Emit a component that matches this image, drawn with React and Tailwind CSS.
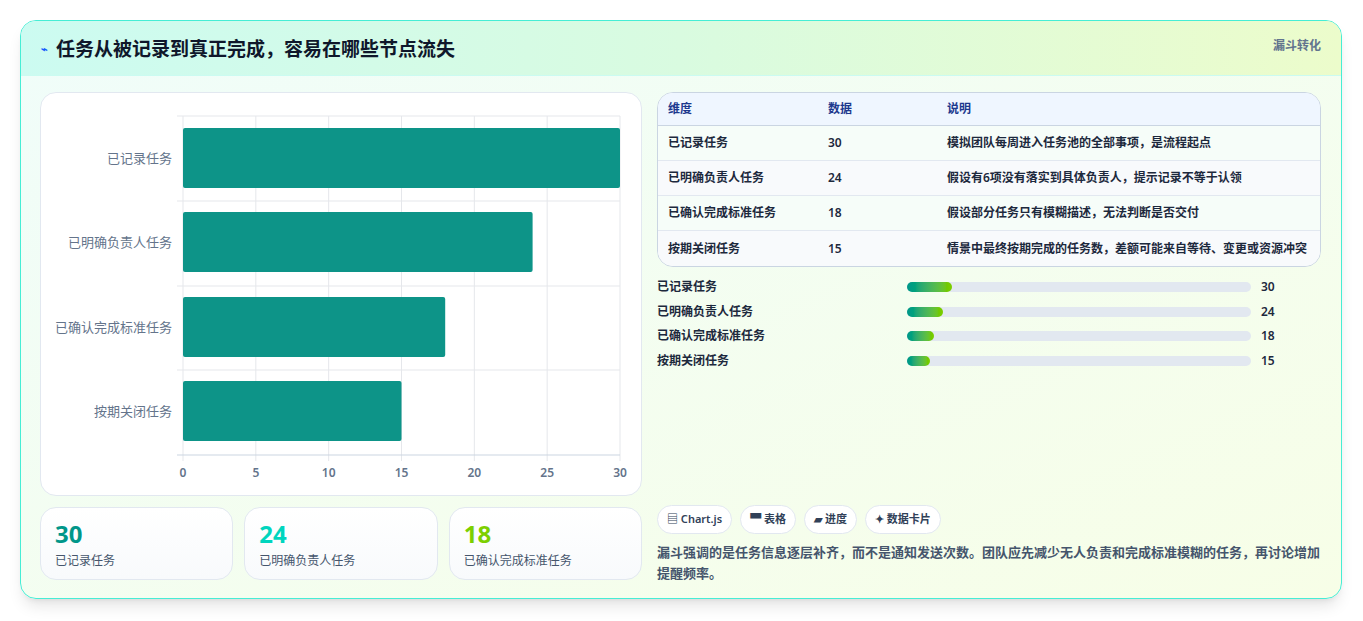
const ROWS = [
  { name: "已记录任务", value: 30, note: "模拟团队每周进入任务池的全部事项，是流程起点" },
  { name: "已明确负责人任务", value: 24, note: "假设有6项没有落实到具体负责人，提示记录不等于认领" },
  { name: "已确认完成标准任务", value: 18, note: "假设部分任务只有模糊描述，无法判断是否交付" },
  { name: "按期关闭任务", value: 15, note: "情景中最终按期完成的任务数，差额可能来自等待、变更或资源冲突" },
];

const font = { fontFamily: '"Noto Sans", "Noto Sans CJK SC", sans-serif' };

function BarChart() {
  const x0 = 142;
  const w = 437;
  const ys = [35, 119, 204, 288];
  return (
    <svg width="602" height="404" className="block">
      {[0, 5, 10, 15, 20, 25, 30].map((t) => (
        <g key={t}>
          <line x1={x0 + (w * t) / 30} x2={x0 + (w * t) / 30} y1="23" y2="368" stroke="#e5e7eb" />
          <text x={x0 + (w * t) / 30} y="384" textAnchor="middle" fontSize="12" fontWeight="600" fill="#64748b">
            {t}
          </text>
        </g>
      ))}
      {[23, 108, 193, 277].map((y) => (
        <line key={y} x1={x0 - 6} x2={x0 + w} y1={y} y2={y} stroke="#e5e7eb" />
      ))}
      <line x1={x0 - 6} x2={x0 + w} y1="362" y2="362" stroke="#cbd5e1" />
      {ROWS.map((r, i) => (
        <g key={r.name}>
          <rect x={x0} y={ys[i]} width={(w * r.value) / 30} height="60" rx="2" fill="#0d9488" />
          <text x={x0 - 11} y={ys[i] + 35} textAnchor="end" fontSize="13" fill="#64748b">
            {r.name}
          </text>
        </g>
      ))}
    </svg>
  );
}

export default function App() {
  return (
    <div className="min-h-screen bg-white px-5 pt-5" style={font}>
      <div className="w-[1322px] overflow-hidden rounded-2xl border border-teal-300 bg-gradient-to-br from-[#f0fdfa] to-[#f7fee7] shadow-lg">
        <div className="flex h-[55px] items-start justify-between border-b border-teal-100 bg-gradient-to-r from-[#ccfbf1] via-[#d9fbe0] to-[#ecfccb] px-5">
          <h1 className="mt-[14px] flex items-center gap-2 text-[19px] font-bold text-slate-900">
            <span className="text-[11px] text-blue-600">⌁</span>任务从被记录到真正完成，容易在哪些节点流失
          </h1>
          <span className="mt-[16px] text-[12px] font-semibold text-slate-500">漏斗转化</span>
        </div>
        <div className="flex gap-[15px] pl-[19px] pr-5 pt-[16px] pb-[18px]">
          <div className="flex w-[602px] flex-col gap-[11px]">
            <div className="h-[404px] rounded-2xl border border-slate-200 bg-white">
              <BarChart />
            </div>
            <div className="grid grid-cols-3 gap-[11px]">
              {[
                ["30", "已记录任务", "text-teal-600"],
                ["24", "已明确负责人任务", "text-teal-400"],
                ["18", "已确认完成标准任务", "text-lime-500"],
              ].map(([v, l, c]) => (
                <div key={l} className="h-[73px] rounded-2xl border border-slate-200 bg-gradient-to-b from-white to-[#f8fafc] px-[14px] pt-[12px]">
                  <div className={`text-[24px] leading-7 font-bold ${c}`}>{v}</div>
                  <div className="mt-[4px] text-[12px] text-slate-600">{l}</div>
                </div>
              ))}
            </div>
          </div>
          <div className="flex w-[667px] flex-col">
            <div className="overflow-hidden rounded-2xl border border-slate-300 bg-white text-[12px]">
              <div className="flex h-[33px] items-center border-b border-slate-300 bg-[#eff6ff] px-[10px] font-semibold text-blue-900">
                <span className="w-[160px]">维度</span>
                <span className="w-[119px]">数据</span>
                <span>说明</span>
              </div>
              {ROWS.map((r, i) => (
                <div key={r.name} className={`flex h-[35px] items-center px-[10px] font-semibold text-slate-800 ${i < 3 ? "border-b border-slate-200" : ""} ${i % 2 ? "bg-[#f8fafc]" : "bg-[#f6fdf9]"}`}>
                  <span className="w-[160px]">{r.name}</span>
                  <span className="w-[119px]">{r.value}</span>
                  <span>{r.note}</span>
                </div>
              ))}
            </div>
            <div className="mt-[11px] flex flex-col gap-[6.5px]">
              {ROWS.map((r) => (
                <div key={r.name} className="flex h-[18px] items-center text-[12px] font-semibold text-slate-800">
                  <span className="w-[250px]">{r.name}</span>
                  <div className="h-[10px] w-[344px] rounded-full bg-slate-200">
                    <div className="h-full rounded-full bg-gradient-to-r from-teal-600 to-lime-500" style={{ width: r.value * 1.5 }} />
                  </div>
                  <span className="ml-[10px]">{r.value}</span>
                </div>
              ))}
            </div>
            <div className="mt-auto flex gap-[8px]">
              {["▤ Chart.js", "▀ 表格", "▰ 进度", "✦ 数据卡片"].map((t) => (
                <span key={t} className="flex h-[29px] items-center rounded-full border border-slate-200 bg-white px-[9px] text-[11px] font-semibold text-slate-700">
                  {t}
                </span>
              ))}
            </div>
            <p className="mt-[8px] mb-[-4px] text-[13px] leading-[21px] font-semibold text-slate-600">
              漏斗强调的是任务信息逐层补齐，而不是通知发送次数。团队应先减少无人负责和完成标准模糊的任务，再讨论增加提醒频率。
            </p>
          </div>
        </div>
      </div>
    </div>
  );
}
